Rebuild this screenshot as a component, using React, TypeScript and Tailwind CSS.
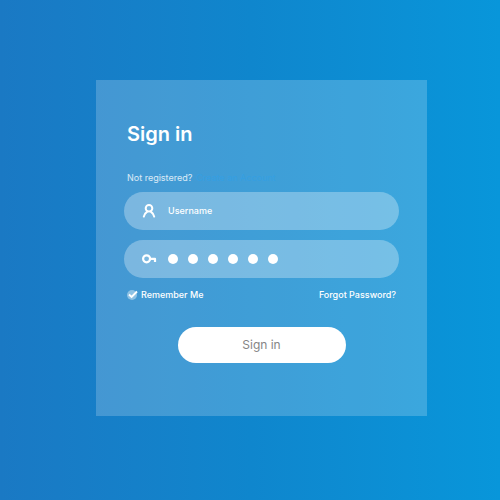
import { useState } from "react";

function UserIcon() {
  return (
    <svg aria-hidden="true" viewBox="0 0 14 16" className="h-4 w-3.5 shrink-0" fill="none" stroke="currentColor" strokeWidth="2" strokeLinecap="round">
      <circle cx="7" cy="5.2" r="3.3" />
      <path d="M1.800 13.600C2.200 11.200 3.600 9.700 5.200 8.600M12.200 13.600C11.800 11.200 10.400 9.700 8.800 8.600" />
    </svg>
  );
}

function KeyIcon() {
  return (
    <svg aria-hidden="true" viewBox="0 0 14 10" className="h-2.5 w-3.5 shrink-0 overflow-visible" fill="none" stroke="currentColor" strokeWidth="2.200">
      <circle cx="4.600" cy="4.800" r="3.500" />
      <path d="M8 4.800H13V8" strokeLinejoin="round" />
    </svg>
  );
}

export default function App() {
  const [password, setPassword] = useState("secret");

  return (
    <main className="min-h-screen bg-linear-to-r from-[#1a79c4] via-[#0f86cd] to-[#0896da] pt-20 pr-[73px] pb-21 pl-24 font-['Inter','Liberation_Sans',sans-serif] text-white">
      <form className="flex w-full flex-col bg-white/20 px-7 pt-10 pb-[53px]" onSubmit={(e) => e.preventDefault()}>
        <h1 className="px-[3px] text-xl leading-7 font-semibold">Sign in</h1>
        <p className="mt-[22px] flex gap-1 px-[3px] text-[9px] leading-4 text-white/80">
          Not registered?
          <a href="#register" className="text-[#359fe2]">Create an Account</a>
        </p>

        <div className="mt-1.5 flex flex-col gap-2.5">
          <label className="flex h-[38px] items-center gap-3 rounded-full bg-white/30 px-[18px]">
            <UserIcon />
            <input
              type="text"
              aria-label="Username"
              placeholder="Username"
              className="w-full min-w-0 bg-transparent text-[9px] leading-4 font-medium outline-none placeholder:text-white"
            />
          </label>
          <label className="relative flex h-[38px] items-center gap-3 rounded-full bg-white/30 px-[18px]">
            <KeyIcon />
            <span aria-hidden="true" className="flex gap-2.5">
              {Array.from(password, (_, i) => (
                <span key={i} className="size-2.5 rounded-full bg-white" />
              ))}
            </span>
            <input
              type="password"
              aria-label="Password"
              value={password}
              onChange={(e) => setPassword(e.target.value)}
              className="absolute inset-0 rounded-full bg-transparent pr-4 pl-11 text-transparent outline-none"
            />
          </label>
        </div>

        <div className="mt-[9px] flex items-center justify-between px-[3px] text-[9px] leading-4 font-medium">
          <label className="flex items-center gap-1">
            <span className="relative flex size-2.5">
              <input type="checkbox" defaultChecked className="peer size-2.5 appearance-none rounded-full bg-white/40" />
              <svg aria-hidden="true" viewBox="0 0 10 10" className="pointer-events-none absolute inset-0 hidden size-2.5 overflow-visible peer-checked:block" fill="none" stroke="currentColor" strokeWidth="1.900">
                <path d="M2 4.500L4.600 7L10 1.500" />
              </svg>
            </span>
            Remember Me
          </label>
          <a href="#forgot">Forgot Password?</a>
        </div>

        <button type="submit" className="mt-6 h-9 w-[168px] self-center rounded-full bg-white text-xs text-[#858585]">
          Sign in
        </button>
      </form>
    </main>
  );
}
